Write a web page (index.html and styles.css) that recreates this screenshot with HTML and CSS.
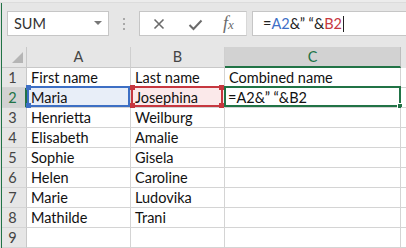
FILE: index.html
```html
<!DOCTYPE html>
<html>
<head>
<meta charset="utf-8">
<link rel="stylesheet" href="styles.css">
</head>
<body>
<div class="app">
  <div class="topstrip"></div>
  <div class="main">
    <div class="toolbar">
      <div class="namebox">
        <span class="nb-text">SUM</span>
        <span class="nb-arrow"></span>
      </div>
      <div class="dots"><i></i><i></i><i></i></div>
      <div class="fxbox">
        <svg class="ico-x" width="12" height="12" viewBox="0 0 12 12"><path d="M1.5 1.5 L10.5 10.5 M10.5 1.5 L1.5 10.5" stroke="#6b6b6b" stroke-width="1.6" fill="none"/></svg>
        <svg class="ico-check" width="15" height="12" viewBox="0 0 15 12"><path d="M1.5 6 L5.5 10 L13.5 1.5" stroke="#6b6b6b" stroke-width="2" fill="none"/></svg>
        <span class="fx"><i>f</i><span class="fx-x">x</span></span>
      </div>
      <div class="formula"><span class="f-dark">=</span><span class="f-blue">A2</span><span class="f-dark">&amp;” “&amp;</span><span class="f-red">B2</span><span class="caret"></span></div>
    </div>
    <div class="grid">
      <div class="corner"><span class="tri"></span></div>
      <div class="ch">A</div>
      <div class="ch">B</div>
      <div class="ch ch-sel">C</div>
      <div class="ch ch-rest"></div>

      <div class="rh">1</div>
      <div class="c">First name</div>
      <div class="c">Last name</div>
      <div class="c">Combined name</div>
      <div class="c c-rest"></div>

      <div class="rh rh-sel">2</div>
      <div class="c c-a2">Maria<span class="sel sel-blue"><b class="h tl"></b><b class="h bl"></b></span></div>
      <div class="c c-b2">Josephina<span class="sel sel-red"><b class="h tl"></b><b class="h tr"></b><b class="h bl"></b><b class="h br"></b></span></div>
      <div class="c c-c2">=A2&amp;” “&amp;B2<span class="sel sel-green"><b class="fill"></b></span></div>
      <div class="c c-rest"></div>

      <div class="rh">3</div>
      <div class="c">Henrietta</div>
      <div class="c">Weilburg</div>
      <div class="c"></div>
      <div class="c c-rest"></div>

      <div class="rh">4</div>
      <div class="c">Elisabeth</div>
      <div class="c">Amalie</div>
      <div class="c"></div>
      <div class="c c-rest"></div>

      <div class="rh">5</div>
      <div class="c">Sophie</div>
      <div class="c">Gisela</div>
      <div class="c"></div>
      <div class="c c-rest"></div>

      <div class="rh">6</div>
      <div class="c">Helen</div>
      <div class="c">Caroline</div>
      <div class="c"></div>
      <div class="c c-rest"></div>

      <div class="rh">7</div>
      <div class="c">Marie</div>
      <div class="c">Ludovika</div>
      <div class="c"></div>
      <div class="c c-rest"></div>

      <div class="rh">8</div>
      <div class="c">Mathilde</div>
      <div class="c">Trani</div>
      <div class="c"></div>
      <div class="c c-rest"></div>

      <div class="rh">9</div>
      <div class="c"></div>
      <div class="c"></div>
      <div class="c"></div>
      <div class="c c-rest"></div>
    </div>
  </div>
</div>
</body>
</html>
```

FILE: styles.css
```css
* { box-sizing: border-box; }
html, body {
  margin: 0;
  padding: 0;
  width: 406px;
  height: 248px;
  overflow: hidden;
  background: #e6e6e6;
  font-family: Lato, "Liberation Sans", sans-serif;
}
.app {
  display: flex;
  flex-direction: column;
  width: 406px;
  height: 248px;
  border-left: 1px solid #dedede;
}
.topstrip {
  height: 4px;
  background: #ececec;
  border-bottom: 1px solid #dcdcdc;
  margin-left: -1px;
}
.main {
  flex: 1;
  display: flex;
  flex-direction: column;
  border-left: 1px solid #217346;
}
.toolbar {
  height: 44px;
  display: flex;
  align-items: flex-start;
  padding-top: 8px;
  padding-left: 5px;
}
.namebox {
  width: 102px;
  height: 25px;
  background: #fff;
  border: 1px solid #c6c6c6;
  display: flex;
  align-items: center;
  justify-content: space-between;
  padding: 0 6px 0 6px;
}
.nb-text {
  font-size: 14.5px;
  color: #333;
  line-height: 22px;
}
.nb-arrow {
  width: 0;
  height: 0;
  border-left: 4px solid transparent;
  border-right: 4px solid transparent;
  border-top: 4px solid #777;
  margin-top: -1px;
}
.dots {
  width: 30px;
  height: 25px;
  display: flex;
  flex-direction: column;
  align-items: center;
  justify-content: center;
  gap: 3px;
}
.dots i {
  display: block;
  width: 2px;
  height: 2px;
  background: #a8a8a8;
}
.fxbox {
  width: 108px;
  height: 25px;
  background: #fff;
  border: 1px solid #c6c6c6;
  border-right: 1px solid #d8d8d8;
  display: flex;
  align-items: center;
  padding-left: 13px;
}
.ico-x { margin-top: 1px; }
.ico-check { margin-left: 23px; margin-top: 2px; }
.fx {
  margin-left: 20px;
  font-family: "Liberation Serif", serif;
  color: #6b6b6b;
  font-style: italic;
  line-height: 20px;
  display: flex;
  align-items: baseline;
}
.fx i { font-size: 18px; }
.fx-x { font-size: 13px; margin-left: 0; }
.formula {
  margin-left: 5px;
  flex: 1;
  height: 25px;
  background: #fff;
  border: 1px solid #c6c6c6;
  border-right: none;
  display: flex;
  align-items: center;
  padding-left: 10px;
  font-size: 14.5px;
  white-space: pre;
}
.f-dark { color: #222; }
.f-blue { color: #3e6fc6; }
.f-red { color: #c6373f; }
.caret {
  display: block;
  width: 1px;
  height: 16px;
  background: #222;
  margin-left: 1px;
}
.grid {
  display: grid;
  grid-template-columns: 25px 104px 94px 176px 1fr;
  grid-template-rows: 21px repeat(9, 20px);
  background: #fff;
}
.corner {
  background: #e6e6e6;
  border-right: 1px solid #c8c8c8;
  border-bottom: 1px solid #c8c8c8;
  display: flex;
  align-items: flex-end;
  justify-content: flex-end;
  padding: 0 3px 4px 0;
}
.tri {
  width: 0;
  height: 0;
  border-left: 11px solid transparent;
  border-bottom: 11px solid #b5b5b5;
}
.ch {
  background: #e6e6e6;
  border-right: 1px solid #cfcfcf;
  border-bottom: 1px solid #c8c8c8;
  text-align: center;
  font-size: 14.5px;
  line-height: 20px;
  color: #444;
}
.ch-sel {
  background: #d2d2d2;
  color: #217346;
  border-bottom: 2px solid #217346;
  border-right-color: #bdbdbd;
}
.ch-rest {
  border-right: none;
  border-bottom: none;
  background: #e6e6e6;
}
.rh {
  background: #e6e6e6;
  border-right: 1px solid #c8c8c8;
  border-bottom: 1px solid #d4d4d4;
  text-align: center;
  font-size: 14.5px;
  line-height: 20px;
  color: #444;
  padding-right: 3px;
}
.rh-sel {
  background: #d2d2d2;
  color: #217346;
  border-right: 2px solid #217346;
  padding-right: 2px;
}
.c {
  position: relative;
  border-right: 1px solid #d4d4d4;
  border-bottom: 1px solid #d4d4d4;
  font-size: 14.5px;
  line-height: 20px;
  color: #111;
  padding-left: 4px;
  white-space: nowrap;
}
.c-rest { border-right: none; }
.c-a2 { background: #e8eef8; }
.c-b2 { background: #fbe9ea; padding-left: 4px; }
.c-c2 { padding-left: 3px; }
.sel {
  position: absolute;
  top: -2px;
  bottom: 0;
  left: 0;
  right: 0;
  border: 2px solid;
  pointer-events: none;
}
.sel-blue { border-color: #3d6fc4; }
.sel-red { border-color: #c6373f; right: 1px; }
.sel-green { border-color: #217346; left: -1px; right: -1px; }
.h {
  position: absolute;
  width: 5px;
  height: 5px;
}
.sel-blue .h { background: #3d6fc4; }
.sel-red .h { background: #c6373f; }
.h.tl { left: -3px; top: -3px; }
.h.tr { right: -3px; top: -3px; }
.h.bl { left: -3px; bottom: -3px; }
.h.br { right: -3px; bottom: -3px; }
.fill {
  position: absolute;
  right: -4px;
  bottom: -4px;
  width: 6px;
  height: 6px;
  background: #217346;
  border: 1px solid #fff;
}
```
